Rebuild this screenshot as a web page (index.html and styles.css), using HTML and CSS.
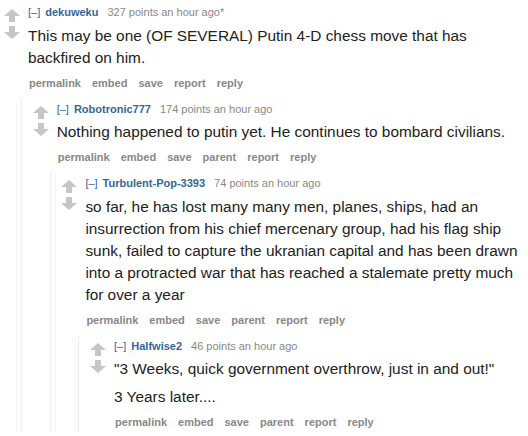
FILE: index.html
```html
<!DOCTYPE html>
<html>
<head>
<meta charset="utf-8">
<link rel="stylesheet" href="styles.css">
</head>
<body>
<div class="thread">
  <div class="comment">
    <div class="row">
      <div class="midcol">
        <svg class="arrow" viewBox="0 0 16 13" width="16" height="13"><path d="M8 0 L16 7 L11 7 L11 13 L5 13 L5 7 L0 7 Z"/></svg>
        <svg class="arrow" viewBox="0 0 16 13" width="16" height="13"><path d="M5 0 L11 0 L11 6 L16 6 L8 13 L0 6 L5 6 Z"/></svg>
      </div>
      <div class="entry">
        <div class="tagline"><span class="expand">[–]</span><span class="author">dekuweku</span><span class="score">327 points an hour ago*</span></div>
        <div class="md"><p>This may be one (OF SEVERAL) Putin 4-D chess move that has backfired on him.</p></div>
        <ul class="buttons"><li>permalink</li><li>embed</li><li>save</li><li>report</li><li>reply</li></ul>
      </div>
    </div>
    <div class="child">
      <div class="comment">
        <div class="row">
          <div class="midcol">
            <svg class="arrow" viewBox="0 0 16 13" width="16" height="13"><path d="M8 0 L16 7 L11 7 L11 13 L5 13 L5 7 L0 7 Z"/></svg>
            <svg class="arrow" viewBox="0 0 16 13" width="16" height="13"><path d="M5 0 L11 0 L11 6 L16 6 L8 13 L0 6 L5 6 Z"/></svg>
          </div>
          <div class="entry">
            <div class="tagline"><span class="expand">[–]</span><span class="author">Robotronic777</span><span class="score">174 points an hour ago</span></div>
            <div class="md"><p>Nothing happened to putin yet. He continues to bombard civilians.</p></div>
            <ul class="buttons"><li>permalink</li><li>embed</li><li>save</li><li>parent</li><li>report</li><li>reply</li></ul>
          </div>
        </div>
        <div class="child">
          <div class="comment">
            <div class="row">
              <div class="midcol">
                <svg class="arrow" viewBox="0 0 16 13" width="16" height="13"><path d="M8 0 L16 7 L11 7 L11 13 L5 13 L5 7 L0 7 Z"/></svg>
                <svg class="arrow" viewBox="0 0 16 13" width="16" height="13"><path d="M5 0 L11 0 L11 6 L16 6 L8 13 L0 6 L5 6 Z"/></svg>
              </div>
              <div class="entry">
                <div class="tagline"><span class="expand">[–]</span><span class="author">Turbulent-Pop-3393</span><span class="score">74 points an hour ago</span></div>
                <div class="md"><p>so far, he has lost many many men, planes, ships, had an insurrection from his chief mercenary group, had his flag ship sunk, failed to capture the ukranian capital and has been drawn into a protracted war that has reached a stalemate pretty much for over a year</p></div>
                <ul class="buttons"><li>permalink</li><li>embed</li><li>save</li><li>parent</li><li>report</li><li>reply</li></ul>
              </div>
            </div>
            <div class="child">
              <div class="comment">
                <div class="row">
                  <div class="midcol">
                    <svg class="arrow" viewBox="0 0 16 13" width="16" height="13"><path d="M8 0 L16 7 L11 7 L11 13 L5 13 L5 7 L0 7 Z"/></svg>
                    <svg class="arrow" viewBox="0 0 16 13" width="16" height="13"><path d="M5 0 L11 0 L11 6 L16 6 L8 13 L0 6 L5 6 Z"/></svg>
                  </div>
                  <div class="entry">
                    <div class="tagline"><span class="expand">[–]</span><span class="author">Halfwise2</span><span class="score">46 points an hour ago</span></div>
                    <div class="md"><p>"3 Weeks, quick government overthrow, just in and out!"</p><p>3 Years later....</p></div>
                    <ul class="buttons"><li>permalink</li><li>embed</li><li>save</li><li>parent</li><li>report</li><li>reply</li></ul>
                  </div>
                </div>
              </div>
            </div>
          </div>
        </div>
      </div>
    </div>
  </div>
</div>
</body>
</html>
```

FILE: styles.css
```css
html, body {
  margin: 0;
  padding: 0;
  background: #ffffff;
  overflow: hidden;
}
body {
  font-family: "Liberation Sans", Arial, sans-serif;
  color: #222222;
}
.thread {
  padding: 2px 0 0 3px;
}
.row {
  display: flex;
  align-items: flex-start;
}
.midcol {
  width: 25px;
  flex: none;
  display: flex;
  flex-direction: column;
  padding: 7px 0 0 1px;
  box-sizing: border-box;
  gap: 4px;
}
.arrow {
  display: block;
  fill: #c6c6c6;
}
.entry {
  flex: 1;
  min-width: 0;
}
.tagline {
  font-size: 11px;
  line-height: 20px;
  color: #888888;
  white-space: nowrap;
}
.expand {
  color: #336699;
  margin-right: 5px;
}
.author {
  color: #336699;
  font-weight: bold;
  margin-right: 9px;
}
.md {
  margin-top: 2.5px;
  font-size: 15.4px;
  line-height: 22px;
  color: #222222;
}
.md p {
  margin: 0;
}
.md p + p {
  margin-top: 6px;
}
.buttons {
  list-style: none;
  margin: 4px 0 0 0;
  padding: 0 0 0 1px;
  display: flex;
  gap: 11px;
  font-size: 11px;
  line-height: 20px;
  font-weight: bold;
  color: #888888;
}
.child {
  margin: 6px 0 0 18px;
  border-left: 1px dotted #ddddff;
  padding-left: 9.7px;
}
```
